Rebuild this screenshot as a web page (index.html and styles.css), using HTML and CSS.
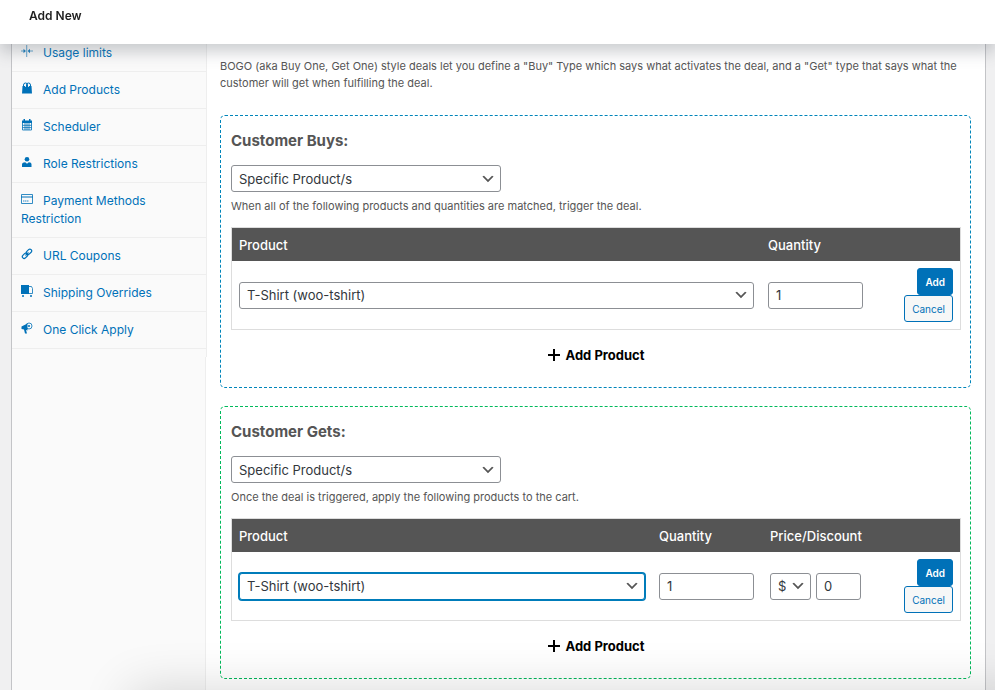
FILE: index.html
```html
<!DOCTYPE html>
<html lang="en">
<head>
    <meta charset="UTF-8">
    <meta name="viewport" content="width=device-width, initial-scale=1.0">
    <title>Add New</title>
    <link rel="stylesheet" href="styles.css">
</head>
<body>
    <header class="page-header">
        <h1>Add New</h1>
    </header>
    <main class="panel">
        <nav class="sidebar">
            <ul class="tabs">
                <li><a href="#usage-limits"><svg viewBox="0 0 12 12"><path d="M5.200 0h1v12h-1zM0 5.500h4v1H0zM8 5.500h4v1H8z" opacity=".6"/><path d="M2.500 3.800 5 6 2.500 8.200zM9 3.800 6.500 6 9 8.200z" opacity=".85"/></svg>Usage limits</a></li>
                <li><a href="#add-products"><svg viewBox="0 0 12 12"><path d="M1.500 4h9l.5 7.500H1z"/><path d="M2.500 5V3a2 2 0 0 1 4 0v2M5.500 5V3a2 2 0 0 1 4 0v2" fill="none" stroke="currentColor"/><path d="M4 3.500h.8V5H4zM7.200 3.500H8V5h-.8z" fill="#fafafa"/></svg>Add Products</a></li>
                <li><a href="#scheduler"><svg viewBox="0 0 12 12"><path d="M1 1.500h10v2.500H1z"/><path d="M2.500 0h1.500v2H2.500zM8 0h1.500v2H8z"/><path d="M1.500 4v7h9V4M4 4v7M6 4v7M8 4v7M1.500 6.300h9M1.500 8.600h9" fill="none" stroke="currentColor" stroke-width=".8"/></svg>Scheduler</a></li>
                <li><a href="#role-restrictions"><svg viewBox="0 0 12 12"><circle cx="6" cy="3.300" r="2.300"/><path d="M1 11V8.500C1 7 2.500 6.300 4.200 6.300L6 7.800l1.800-1.500C9.500 6.300 10.500 7 10.500 8.500V11z"/></svg>Role Restrictions</a></li>
                <li><a href="#payment-methods"><svg viewBox="0 0 12 12"><path d="M.5 1.500h11v9H.5z" fill="none" stroke="currentColor" stroke-width=".8"/><path d="M0 3.500h12v1H0z"/><path d="M2 7.500h1.500v1H2zM4 7.500h1.500v1H4zM6 7.500h1.500v1H6z" opacity=".8"/></svg>Payment Methods Restriction</a></li>
                <li><a href="#url-coupons"><svg viewBox="0 0 12 12"><g fill="none" stroke="currentColor" stroke-width="1.200"><rect x="5" y="2" width="6" height="3.600" rx="1.800" transform="rotate(-45 8 3.800)"/><rect x="1" y="6" width="6" height="3.600" rx="1.800" transform="rotate(-45 4 7.800)"/><path d="m4.500 7.500 3-3"/></g></svg>URL Coupons</a></li>
                <li><a href="#shipping-overrides"><svg viewBox="0 0 12 12"><path d="M0 0h8v9H0z"/><path d="M8 1.500h2.500l1 2v5H8" fill="none" stroke="currentColor" stroke-width=".8"/><circle cx="2" cy="11" r="1"/><circle cx="10" cy="11" r="1"/></svg>Shipping Overrides</a></li>
                <li><a href="#one-click-apply"><svg viewBox="0 0 12 12"><path d="M.5 4.500 6.500 1.500v7L5 8l1 3.500H4L3 7.500.500 7z"/><circle cx="8" cy="4" r="3" fill="none" stroke="currentColor" stroke-width=".8"/><circle cx="8" cy="4" r="1"/></svg>One Click Apply</a></li>
            </ul>
        </nav>
        <div class="content">
            <p class="intro">BOGO (aka Buy One, Get One) style deals let you define a "Buy" Type which says what activates the deal, and a "Get" type that says what the customer will get when fulfilling the deal.</p>

            <section class="deal deal-buys">
                <h3 id="buys-title">Customer Buys:</h3>
                <select class="field type-select" aria-labelledby="buys-title">
                    <option>Specific Product/s</option>
                </select>
                <p class="help">When all of the following products and quantities are matched, trigger the deal.</p>
                <table>
                    <thead>
                        <tr>
                            <th id="buys-product">Product</th>
                            <th id="buys-quantity" class="col-quantity">Quantity</th>
                            <th class="col-actions-wide"></th>
                        </tr>
                    </thead>
                    <tbody>
                        <tr>
                            <td>
                                <select class="field product-select" aria-labelledby="buys-product">
                                    <option>T-Shirt (woo-tshirt)</option>
                                </select>
                            </td>
                            <td><input class="field quantity" type="text" value="1" aria-labelledby="buys-quantity"></td>
                            <td>
                                <div class="actions">
                                    <button type="button" class="button button-primary">Add</button>
                                    <button type="button" class="button">Cancel</button>
                                </div>
                            </td>
                        </tr>
                    </tbody>
                </table>
                <button type="button" class="add-product"><svg viewBox="0 0 12 12"><path d="M5 0h2v5h5v2H7v5H5V7H0V5h5z"/></svg>Add Product</button>
            </section>

            <section class="deal deal-gets">
                <h3 id="gets-title">Customer Gets:</h3>
                <select class="field type-select" aria-labelledby="gets-title">
                    <option>Specific Product/s</option>
                </select>
                <p class="help">Once the deal is triggered, apply the following products to the cart.</p>
                <table>
                    <thead>
                        <tr>
                            <th id="gets-product">Product</th>
                            <th id="gets-quantity" class="col-quantity">Quantity</th>
                            <th id="gets-price" class="col-price">Price/Discount</th>
                            <th class="col-actions"></th>
                        </tr>
                    </thead>
                    <tbody>
                        <tr>
                            <td>
                                <select class="field product-select is-active" aria-labelledby="gets-product">
                                    <option>T-Shirt (woo-tshirt)</option>
                                </select>
                            </td>
                            <td><input class="field quantity" type="text" value="1" aria-labelledby="gets-quantity"></td>
                            <td>
                                <div class="price">
                                    <select class="field discount-type" aria-labelledby="gets-price">
                                        <option>$</option>
                                    </select>
                                    <input class="field discount" type="text" value="0" aria-labelledby="gets-price">
                                </div>
                            </td>
                            <td>
                                <div class="actions">
                                    <button type="button" class="button button-primary">Add</button>
                                    <button type="button" class="button">Cancel</button>
                                </div>
                            </td>
                        </tr>
                    </tbody>
                </table>
                <button type="button" class="add-product"><svg viewBox="0 0 12 12"><path d="M5 0h2v5h5v2H7v5H5V7H0V5h5z"/></svg>Add Product</button>
            </section>
        </div>
    </main>
</body>
</html>
```
FILE: styles.css
```css
* {
    box-sizing: border-box;
}
body {
    margin: 0;
    padding: 35px 9px 0 11px;
    min-height: 100vh;
    display: flex;
    overflow-x: hidden;
    background: #f0f0f1;
    color: #555;
    font-family: Inter, "Liberation Sans", sans-serif;
    font-size: 12px;
    line-height: 18px;
}
/* shadow of the bar docked under the window */
body::after {
    content: "";
    position: fixed;
    top: 100%;
    left: 130px;
    right: -40px;
    height: 60px;
    box-shadow: 0 0 50px rgba(0, 0, 0, 0.16);
}
.page-header {
    position: fixed;
    top: 0;
    left: 0;
    right: 0;
    z-index: 10;
    height: 44px;
    padding: 6px 29px;
    background: #fff;
    box-shadow: 0 8px 16px rgba(85, 93, 102, 0.3);
}
.page-header h1 {
    margin: 0;
    color: #1e1e1e;
    font-size: 12px;
    font-weight: 600;
    line-height: 20px;
}
.panel {
    flex: 1;
    display: flex;
    min-width: 0;
    background: #fff;
    border-left: 1px solid #c3c4c7;
    border-right: 1px solid #c3c4c7;
}

/* Sidebar */
.sidebar {
    flex: 0 0 194px;
    background: #fafafa;
    border-right: 1px solid #eee;
}
.tabs {
    list-style: none;
    margin: 0 -2px 0 0;
    padding: 0 0 8px;
    background: #fafafa;
    border-right: 1px solid #eee;
}
.tabs a {
    display: block;
    padding: 9px;
    border-bottom: 1px solid #eee;
    color: #0071b8;
    text-decoration: none;
}
.tabs svg {
    width: 12px;
    height: 12px;
    margin-right: 10px;
    fill: currentColor;
}

/* Deal boxes */
.content {
    flex: 1;
    min-width: 0;
    padding: 23px 14px 11px;
}
.intro {
    margin: 0 0 23px;
    font-size: 11px;
    line-height: 17px;
}
.deal {
    padding: 10px 9px 22px 10px;
    border: 1px dashed #0085ba;
    border-radius: 5px;
}
.deal-gets {
    margin-top: 18px;
    border-color: #00ba5b;
}
.deal h3 {
    margin: 0 0 9px;
    font-size: 15px;
    font-weight: 700;
    line-height: 30px;
}
.help {
    margin: 5px 0 12px;
    font-size: 11px;
}
.field {
    display: block;
    height: 27px;
    margin: 0;
    padding: 0 7px;
    border: 1px solid #8c8f94;
    border-radius: 3px;
    background: #fff;
    color: #32373c;
    font-family: inherit;
    font-size: 13px;
}
select.field {
    appearance: none;
    padding-right: 24px;
    background: #fff url("data:image/svg+xml,%3Csvg xmlns='http://www.w3.org/2000/svg' viewBox='0 0 20 20'%3E%3Cpath d='M5 6l5 5 5-5 2 1-7 7-7-7 2-1z' fill='%23555'/%3E%3C/svg%3E") no-repeat right 4px top 55%;
    background-size: 16px 16px;
}
.type-select {
    width: 270px;
}
.product-select {
    width: 100%;
}
.product-select.is-active {
    border-color: #007cba;
    box-shadow: 0 0 0 1px #007cba;
}
.quantity {
    width: 95px;
}
.price {
    display: flex;
    gap: 5px;
}
.discount-type {
    width: 41px;
}
.discount {
    width: 45px;
}

table {
    width: 100%;
    table-layout: fixed;
    border: 1px solid #ddd;
    border-spacing: 0;
}
th {
    height: 33px;
    padding: 0 7px;
    background: #555;
    color: #fff;
    font-size: 13px;
    font-weight: 500;
    text-align: left;
}
td {
    padding: 7px;
    vertical-align: middle;
}
.col-quantity {
    width: 111px;
}
.col-price {
    width: 134px;
}
.col-actions {
    width: 63px;
}
.col-actions-wide {
    width: 199px;
}
.col-quantity + .col-actions-wide {
    width: 88px;
}
.actions {
    display: flex;
    flex-direction: column;
    align-items: flex-end;
}
.button {
    height: 27px;
    padding: 0 7px;
    border: 1px solid #0071b8;
    border-radius: 3px;
    background: #f6f7f7;
    color: #0071b8;
    font-family: inherit;
    font-size: 10px;
    cursor: pointer;
}
.button-primary {
    background: #0071b8;
    color: #fff;
    font-weight: 600;
}
.add-product {
    display: flex;
    align-items: center;
    gap: 6px;
    margin: 15px auto 0;
    padding: 0;
    border: 0;
    background: none;
    color: #000;
    font-family: inherit;
    font-size: 13px;
    font-weight: 700;
    line-height: 20px;
    cursor: pointer;
}
.add-product svg {
    width: 12px;
    height: 12px;
}
```
